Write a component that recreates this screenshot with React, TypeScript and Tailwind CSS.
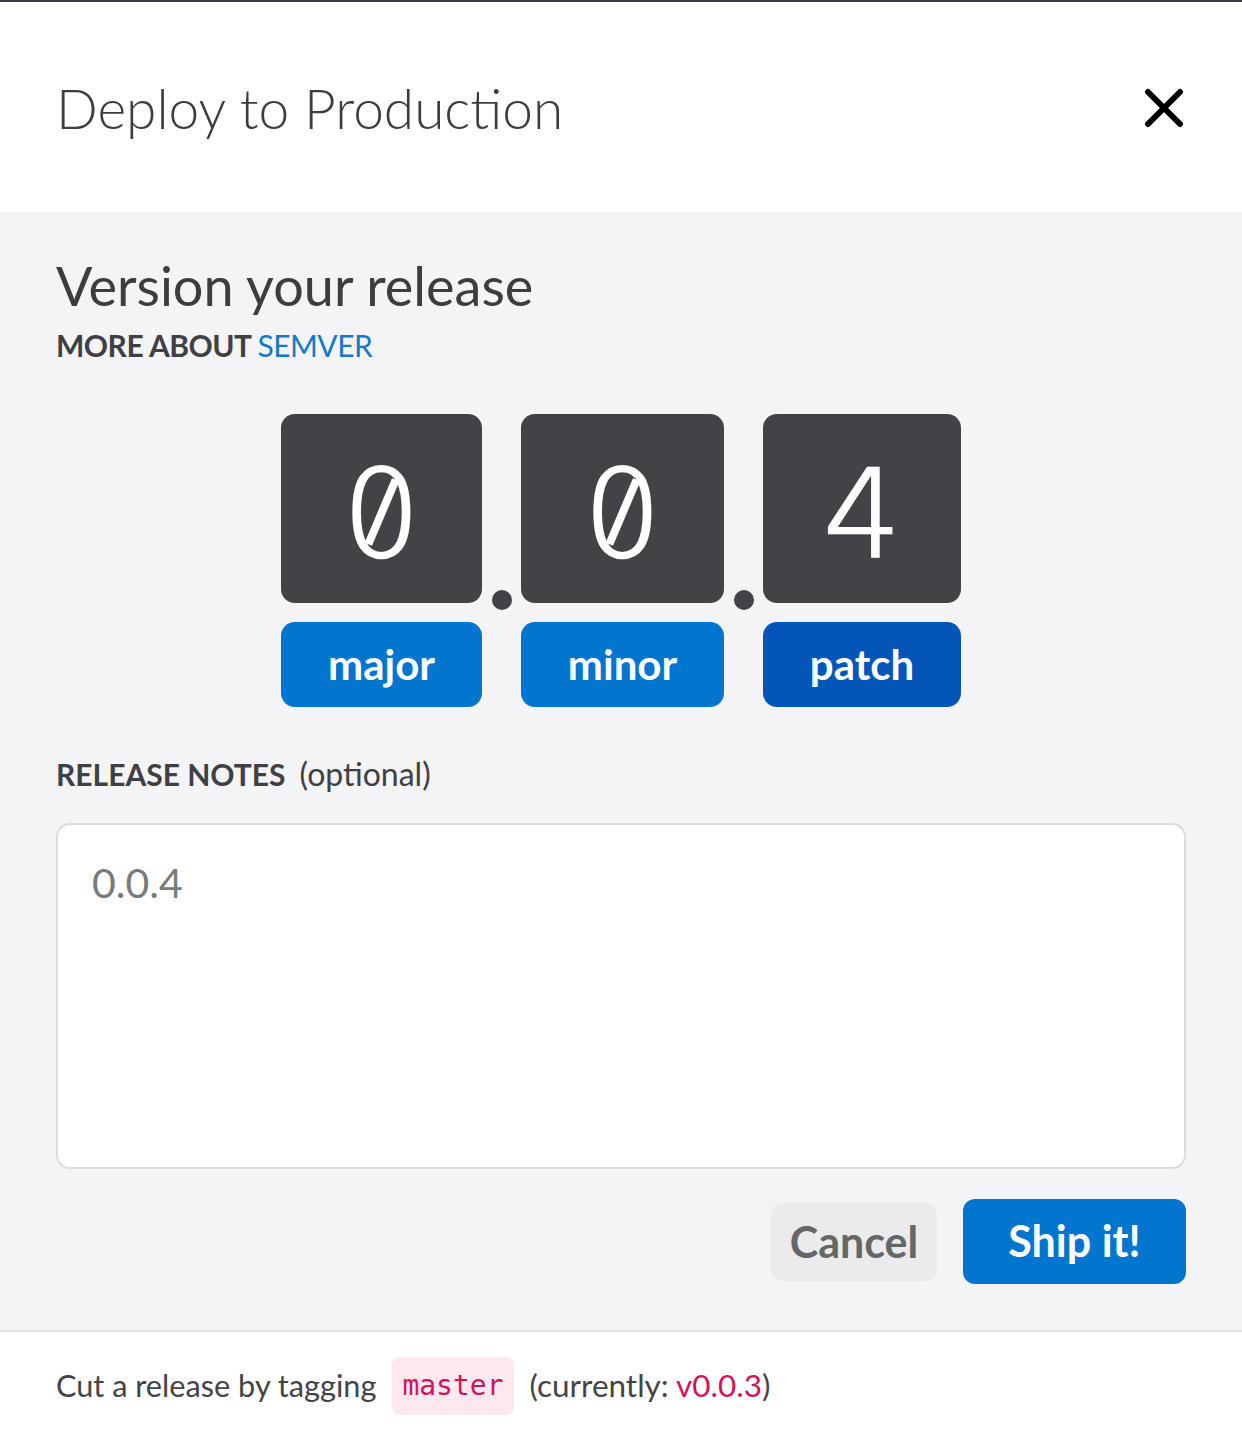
import React from "react";

const sans = { fontFamily: "Lato, 'Noto Sans', sans-serif" };
const mono = { fontFamily: "'DejaVu Sans Mono', 'Liberation Mono', monospace" };
const digitFont = { fontFamily: "'DejaVu Sans', 'Liberation Sans', sans-serif" };

function CloseIcon() {
    return (
        <svg width="40" height="40" viewBox="0 0 40 40" fill="none">
            <path
                d="M4 4 L36 36 M36 4 L4 36"
                stroke="#000"
                strokeWidth="6"
                strokeLinecap="round"
            />
        </svg>
    );
}

function Digit({ value }: { value: string }) {
    return (
        <div
            className="relative flex h-[189px] items-center justify-center rounded-[14px] bg-[#434247] pt-[11px] text-[122px] font-extralight leading-none text-white [-webkit-text-stroke:2.5px_white]"
            style={digitFont}
        >
            {value}
            {/* slashed zero */}
            {value === "0" && (
                <span className="absolute left-1/2 top-1/2 mt-[4px] h-[70px] w-[8px] -translate-x-1/2 -translate-y-1/2 rotate-[23deg] bg-white" />
            )}
        </div>
    );
}

function Bump({ label, active }: { label: string; active?: boolean }) {
    return (
        <button
            className={
                "h-[85px] rounded-[14px] text-[42px] font-bold text-white " +
                (active ? "bg-[#0256b8]" : "bg-[#0275cf]")
            }
        >
            {label}
        </button>
    );
}

function Dot() {
    return (
        <div className="flex items-end justify-center">
            <div className="mb-[-7px] h-[20px] w-[20px] rounded-full bg-[#434247]" />
        </div>
    );
}

export default function App() {
    return (
        <div className="flex min-h-[1435px] w-full flex-col bg-white" style={sans}>
            {/* Header */}
            <div className="flex h-[212px] items-center justify-between border-t-2 border-[#3e3946] pl-[56px] pr-[58px] pt-[2px]">
                <h1 className="text-[55px] font-light text-[#3d3d40]">Deploy to Production</h1>
                <CloseIcon />
            </div>

            {/* Body */}
            <div className="flex flex-1 flex-col bg-[#f4f4f6] px-[56px] pb-[46px] pt-[42px]">
                <h2 className="text-[54px] leading-[1.2] text-[#3d3d40]">Version your release</h2>
                <p className="mt-[4px] text-[30px] font-bold tracking-[-0.5px] text-[#404044]">
                    MORE ABOUT <span className="font-normal text-[#1479c8]">SEMVER</span>
                </p>

                <div className="mt-[46px] grid grid-cols-[201px_39px_203px_39px_198px] grid-rows-[189px_85px] justify-center gap-y-[19px]">
                    <Digit value="0" />
                    <Dot />
                    <Digit value="0" />
                    <Dot />
                    <Digit value="4" />
                    <Bump label="major" />
                    <div />
                    <Bump label="minor" />
                    <div />
                    <Bump label="patch" active />
                </div>

                <div className="mt-[44px] flex items-baseline gap-[14px] leading-[45px]">
                    <span className="text-[30px] font-bold text-[#404044]">RELEASE NOTES</span>
                    <span className="text-[32px] text-[#404044]">(optional)</span>
                </div>

                <textarea
                    className="mt-[26px] h-[346px] w-full resize-none rounded-[14px] border-2 border-[#dddddf] bg-white px-[34px] pb-[30px] pt-[27px] text-[41px] text-[#333] outline-none placeholder:text-[#7a7a7c]"
                    placeholder="0.0.4"
                />

                <div className="mt-[30px] flex justify-end gap-[26px]">
                    <button className="mt-[4px] h-[78px] w-[166px] rounded-[12px] bg-[#ebebed] text-[43px] font-bold text-[#666668]">
                        Cancel
                    </button>
                    <button className="h-[85px] w-[223px] rounded-[12px] bg-[#0275cf] text-[43px] font-bold text-white">
                        Ship it!
                    </button>
                </div>
            </div>

            {/* Footer */}
            <div className="flex h-[107px] items-center border-t-2 border-[#e2e2e4] px-[56px] pt-[3px] text-[30.7px] text-[#444447]">
                <span>Cut a release by tagging</span>
                <span
                    className="ml-[16px] rounded-[8px] bg-[#fde8ee] px-[10px] py-[8px] text-[28px] text-[#d1155c]"
                    style={mono}
                >
                    master
                </span>
                <span className="ml-[16px] text-[31.5px]">
                    (currently: <span className="text-[#d1155c]">v0.0.3</span>)
                </span>
            </div>
        </div>
    );
}
